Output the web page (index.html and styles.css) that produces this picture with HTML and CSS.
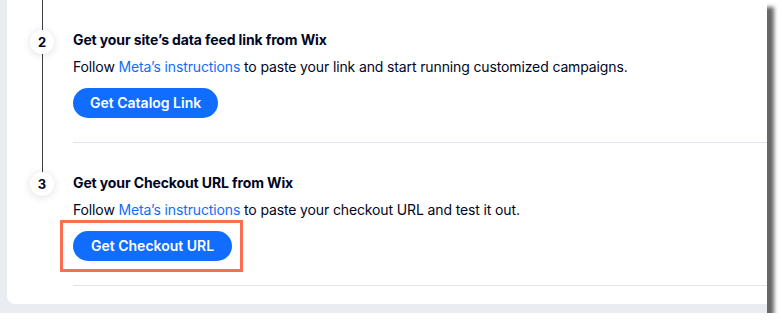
FILE: index.html
```html
<!DOCTYPE html>
<html lang="en">
<head>
<meta charset="utf-8">
<title>Meta catalog setup steps</title>
<link rel="stylesheet" href="styles.css">
</head>
<body>
<div class="frame">
  <div class="card">
    <div class="step step-mid">
      <div class="rail"><span class="num">2</span></div>
      <div class="content">
        <h3 class="title">Get your site’s data feed link from Wix</h3>
        <p class="desc">Follow <a class="link" href="#">Meta’s instructions</a> to paste your link and start running customized campaigns.</p>
        <button class="btn" type="button">Get Catalog Link</button>
      </div>
    </div>
    <div class="step step-last">
      <div class="rail"><span class="num">3</span></div>
      <div class="content sep">
        <h3 class="title">Get your Checkout URL from Wix</h3>
        <p class="desc">Follow <a class="link" href="#">Meta’s instructions</a> to paste your checkout URL and test it out.</p>
        <span class="highlight"><button class="btn" type="button">Get Checkout URL</button></span>
      </div>
    </div>
    <div class="step step-end">
      <div class="rail"></div>
      <div class="content sep"></div>
    </div>
  </div>
</div>
</body>
</html>
```

FILE: styles.css
```css
* { box-sizing: border-box; }
html, body { margin: 0; padding: 0; background: #ffffff; }
body { font-family: Inter, "Noto Sans", sans-serif; color: #000624; }

.frame {
  width: 767px;
  height: 313px;
  background: #e9edf2;
  padding: 0 0 9px 7px;
  box-shadow: 7px 7px 4px rgba(0, 0, 0, 0.6);
}
.card {
  background: #ffffff;
  height: 304px;
  border-bottom-left-radius: 8px;
  overflow: hidden;
}

.step {
  display: grid;
  grid-template-columns: 66px 1fr;
}
.rail { position: relative; }
.rail::before {
  content: "";
  position: absolute;
  left: 35px;
  top: 0;
  width: 1px;
  background: #3b3f4a;
}
.step-mid .rail::before { bottom: 0; }
.step-last .rail::before { height: 31px; }
.step-end .rail::before { display: none; }

.num {
  position: absolute;
  left: 23px;
  top: 30px;
  width: 24px;
  height: 24px;
  border-radius: 50%;
  background: #ffffff;
  box-shadow: 0 1px 8px rgba(0, 6, 36, 0.13);
  display: flex;
  align-items: center;
  justify-content: center;
  font-size: 13px;
  font-weight: 700;
  color: #000624;
}

.content {
  padding: 30px 0 24px 0;
  display: flex;
  flex-direction: column;
  align-items: flex-start;
}
.sep { border-top: 1px solid #dfe5eb; padding-top: 30px; }
.step-end .content { padding: 0; height: 19px; }

.title {
  margin: 0;
  font-size: 14px;
  line-height: 20px;
  font-weight: 700;
  letter-spacing: -0.12px;
}
.desc {
  margin: 7px 0 0 0;
  font-size: 14px;
  line-height: 20px;
  font-weight: 400;
  letter-spacing: -0.13px;
}
.link { color: #116dff; text-decoration: none; }

.btn {
  margin-top: 11px;
  height: 30px;
  padding: 0 17px;
  border: 0;
  border-radius: 15px;
  background: #116dff;
  color: #ffffff;
  font-family: inherit;
  font-size: 14px;
  font-weight: 600;
  line-height: 30px;
}
.highlight {
  position: relative;
  display: inline-flex;
  margin-top: 11px;
}
.highlight .btn { margin-top: 0; padding: 0 18px; }
.highlight::after {
  content: "";
  position: absolute;
  left: -13px;
  right: -11px;
  top: -11px;
  bottom: -11px;
  border: 3px solid #fb6e50;
}
```
